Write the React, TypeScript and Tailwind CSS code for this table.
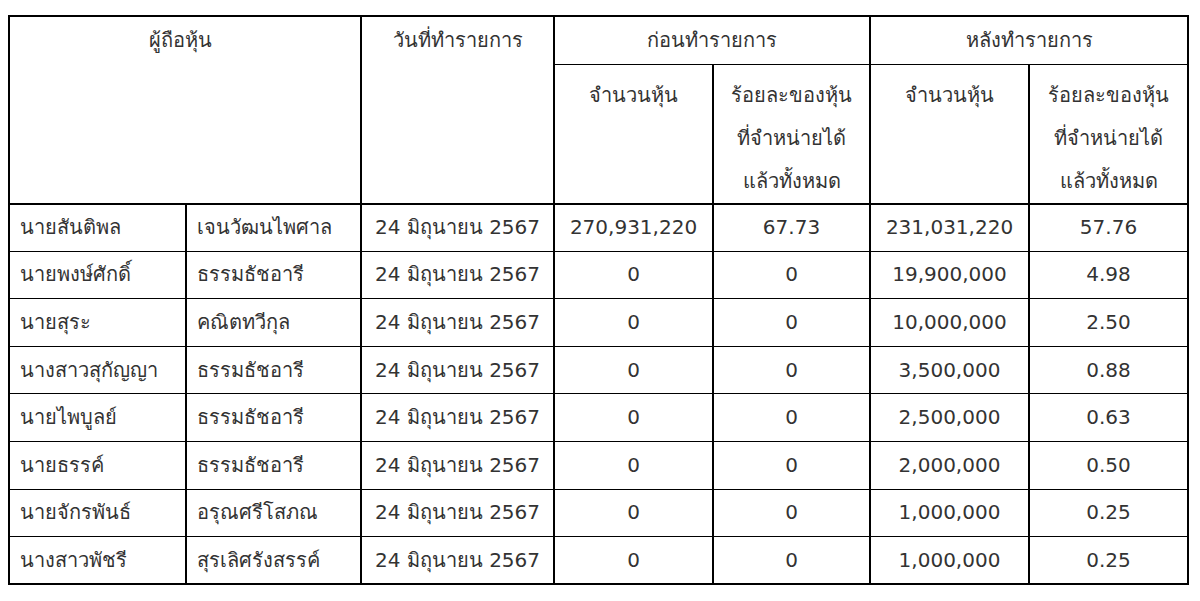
import React from 'react';

const ROWS = [
  ['นายสันติพล', 'เจนวัฒนไพศาล', '270,931,220', '67.73', '231,031,220', '57.76'],
  ['นายพงษ์ศักดิ์', 'ธรรมธัชอารี', '0', '0', '19,900,000', '4.98'],
  ['นายสุระ', 'คณิตทวีกุล', '0', '0', '10,000,000', '2.50'],
  ['นางสาวสุกัญญา', 'ธรรมธัชอารี', '0', '0', '3,500,000', '0.88'],
  ['นายไพบูลย์', 'ธรรมธัชอารี', '0', '0', '2,500,000', '0.63'],
  ['นายธรรค์', 'ธรรมธัชอารี', '0', '0', '2,000,000', '0.50'],
  ['นายจักรพันธ์', 'อรุณศรีโสภณ', '0', '0', '1,000,000', '0.25'],
  ['นางสาวพัชรี', 'สุรเลิศรังสรรค์', '0', '0', '1,000,000', '0.25'],
];

const th = 'border-x-2 border-black font-normal align-top';
const td = 'border-x-2 border-black border-t border-black px-[10px] py-0';

export default function App() {
  return (
    <div className="min-h-[601px] bg-white pl-[8px] pt-[15px] text-[20px] text-[#333] [font-family:Tahoma,'DejaVu_Sans','Noto_Sans',sans-serif]">
      <table className="w-[1179px] table-fixed border-collapse border-2 border-black leading-[43px]">
        <colgroup>
          <col className="w-[177px]" />
          <col className="w-[175px]" />
          <col className="w-[193px]" />
          <col className="w-[159px]" />
          <col className="w-[157px]" />
          <col className="w-[159px]" />
          <col className="w-[159px]" />
        </colgroup>
        <thead>
          <tr className="h-[48px]">
            <th colSpan={2} rowSpan={2} className={`${th} pt-[2px] pr-[10px] text-center`}>
              ผู้ถือหุ้น
            </th>
            <th rowSpan={2} className={`${th} pt-[2px] text-center`}>
              วันที่ทำรายการ
            </th>
            <th colSpan={2} className={`${th} pt-[2px] text-center`}>
              ก่อนทำรายการ
            </th>
            <th colSpan={2} className={`${th} pt-[2px] text-center`}>
              หลังทำรายการ
            </th>
          </tr>
          <tr className="h-[139px] border-b-2 border-black">
            <th className={`${th} border-t pt-[9px] text-center`}>จำนวนหุ้น</th>
            <th className={`${th} border-t pt-[9px] text-center`}>
              ร้อยละของหุ้น
              <br />
              ที่จำหน่ายได้
              <br />
              แล้วทั้งหมด
            </th>
            <th className={`${th} border-t pt-[9px] text-center`}>จำนวนหุ้น</th>
            <th className={`${th} border-t pt-[9px] text-center`}>
              ร้อยละของหุ้น
              <br />
              ที่จำหน่ายได้
              <br />
              แล้วทั้งหมด
            </th>
          </tr>
        </thead>
        <tbody>
          {ROWS.map((r, i) => (
            <tr key={i} className="h-[47.6px]">
              <td className={`${td} text-left`}>{r[0]}</td>
              <td className={`${td} text-left`}>{r[1]}</td>
              <td className={`${td} text-center`}>24 มิถุนายน 2567</td>
              <td className={`${td} text-center`}>{r[2]}</td>
              <td className={`${td} text-center`}>{r[3]}</td>
              <td className={`${td} text-center`}>{r[4]}</td>
              <td className={`${td} text-center`}>{r[5]}</td>
            </tr>
          ))}
        </tbody>
      </table>
    </div>
  );
}
